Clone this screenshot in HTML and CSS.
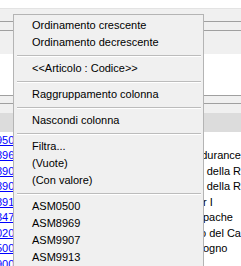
FILE: index.html
```html
<!DOCTYPE html>
<html lang="it">
<head>
  <meta charset="UTF-8" />
  <title>Griglia articoli</title>
  <link rel="stylesheet" href="styles.css">
</head>
<body>
  <div class="app">
    <div class="top-strip"></div>
    <div class="toolbar">
      <div class="toolbar-band"></div>
    </div>
    <div class="group-panel"></div>
    <div class="filter-bar">
      <div class="filter-row"></div>
    </div>
    <div class="grid-header"></div>

    <div class="grid-rows">
      <div class="grid-row"><a class="code" href="#">ASM0950</a><span class="desc"></span></div>
      <div class="grid-row"><a class="code" href="#">ASM0896</a><span class="desc">durance</span></div>
      <div class="grid-row"><a class="code" href="#">ASM0890</a><span class="desc">e della R</span></div>
      <div class="grid-row"><a class="code" href="#">ASM9890</a><span class="desc">e della R</span></div>
      <div class="grid-row"><a class="code" href="#">ASM0891</a><span class="desc">r I</span></div>
      <div class="grid-row"><a class="code" href="#">ASM1347</a><span class="desc">pache</span></div>
      <div class="grid-row"><a class="code" href="#">ASM1020</a><span class="desc">o del Ca</span></div>
      <div class="grid-row"><a class="code" href="#">ASM1500</a><span class="desc">ogno</span></div>
      <div class="grid-row"><a class="code" href="#">ASM0900</a><span class="desc"></span></div>
    </div>

    <!-- context menu of the column header -->
    <div class="context-menu">
      <div class="menu-item">Ordinamento crescente</div>
      <div class="menu-item">Ordinamento decrescente</div>
      <div class="menu-sep"></div>
      <div class="menu-item">&lt;&lt;Articolo : Codice&gt;&gt;</div>
      <div class="menu-sep"></div>
      <div class="menu-item">Raggruppamento colonna</div>
      <div class="menu-sep"></div>
      <div class="menu-item">Nascondi colonna</div>
      <div class="menu-sep"></div>
      <div class="menu-item">Filtra...</div>
      <div class="menu-item">(Vuote)</div>
      <div class="menu-item">(Con valore)</div>
      <div class="menu-sep"></div>
      <div class="menu-item">ASM0500</div>
      <div class="menu-item">ASM8969</div>
      <div class="menu-item">ASM9907</div>
      <div class="menu-item">ASM9913</div>
    </div>
  </div>
</body>
</html>
```

FILE: styles.css
```css
html, body {
  margin: 0;
  padding: 0;
  height: 100%;
}

body {
  background: #fff;
  font-family: 'Liberation Sans', Arial, sans-serif;
  font-size: 11px;
  color: #000;
  overflow: hidden;
}

.app {
  position: relative;
  width: 241px;
  height: 266px;
  overflow: hidden;
}

.top-strip {
  height: 8px;
  background: #fff;
}

.toolbar {
  height: 46px;
  box-sizing: border-box;
  padding-top: 12px;
  background: #f0f0f0;
  border-top: 1px solid #e3e3e3;
}

.toolbar-band {
  height: 8px;
  border-top: 1px solid #a0a0a0;
  border-bottom: 1px solid #a0a0a0;
}

.group-panel {
  height: 41px;
  background: #fff;
  border-bottom: 1px solid #a0a0a0;
}

.filter-bar {
  height: 17px;
  background: #f0f0f0;
}

.filter-row {
  height: 7px;
  border-bottom: 1px solid #a0a0a0;
}

.grid-header {
  height: 19px;
  background: #dcdcdc;
}

.grid-rows {
  display: flex;
  flex-direction: column;
}

.grid-row {
  display: flex;
  align-items: center;
  height: 15.5px;
  white-space: nowrap;
}

.code {
  width: 237px;
  margin-left: -34px;
  color: #0000ff;
  text-decoration: underline;
}

.desc {
  flex: 1;
}

.context-menu {
  position: absolute;
  left: 13px;
  top: 14px;
  width: 189px;
  height: 270px;
  padding-top: 2px;
  background: #f0f0f0;
  border: 1px solid #b4b4b4;
}

.menu-item {
  height: 17px;
  line-height: 17px;
  padding-left: 18px;
  white-space: nowrap;
}

.menu-sep {
  margin: 4px 2px 3px 3px;
  border-top: 1px solid #bcbcbc;
  border-bottom: 1px solid #fff;
}
```
